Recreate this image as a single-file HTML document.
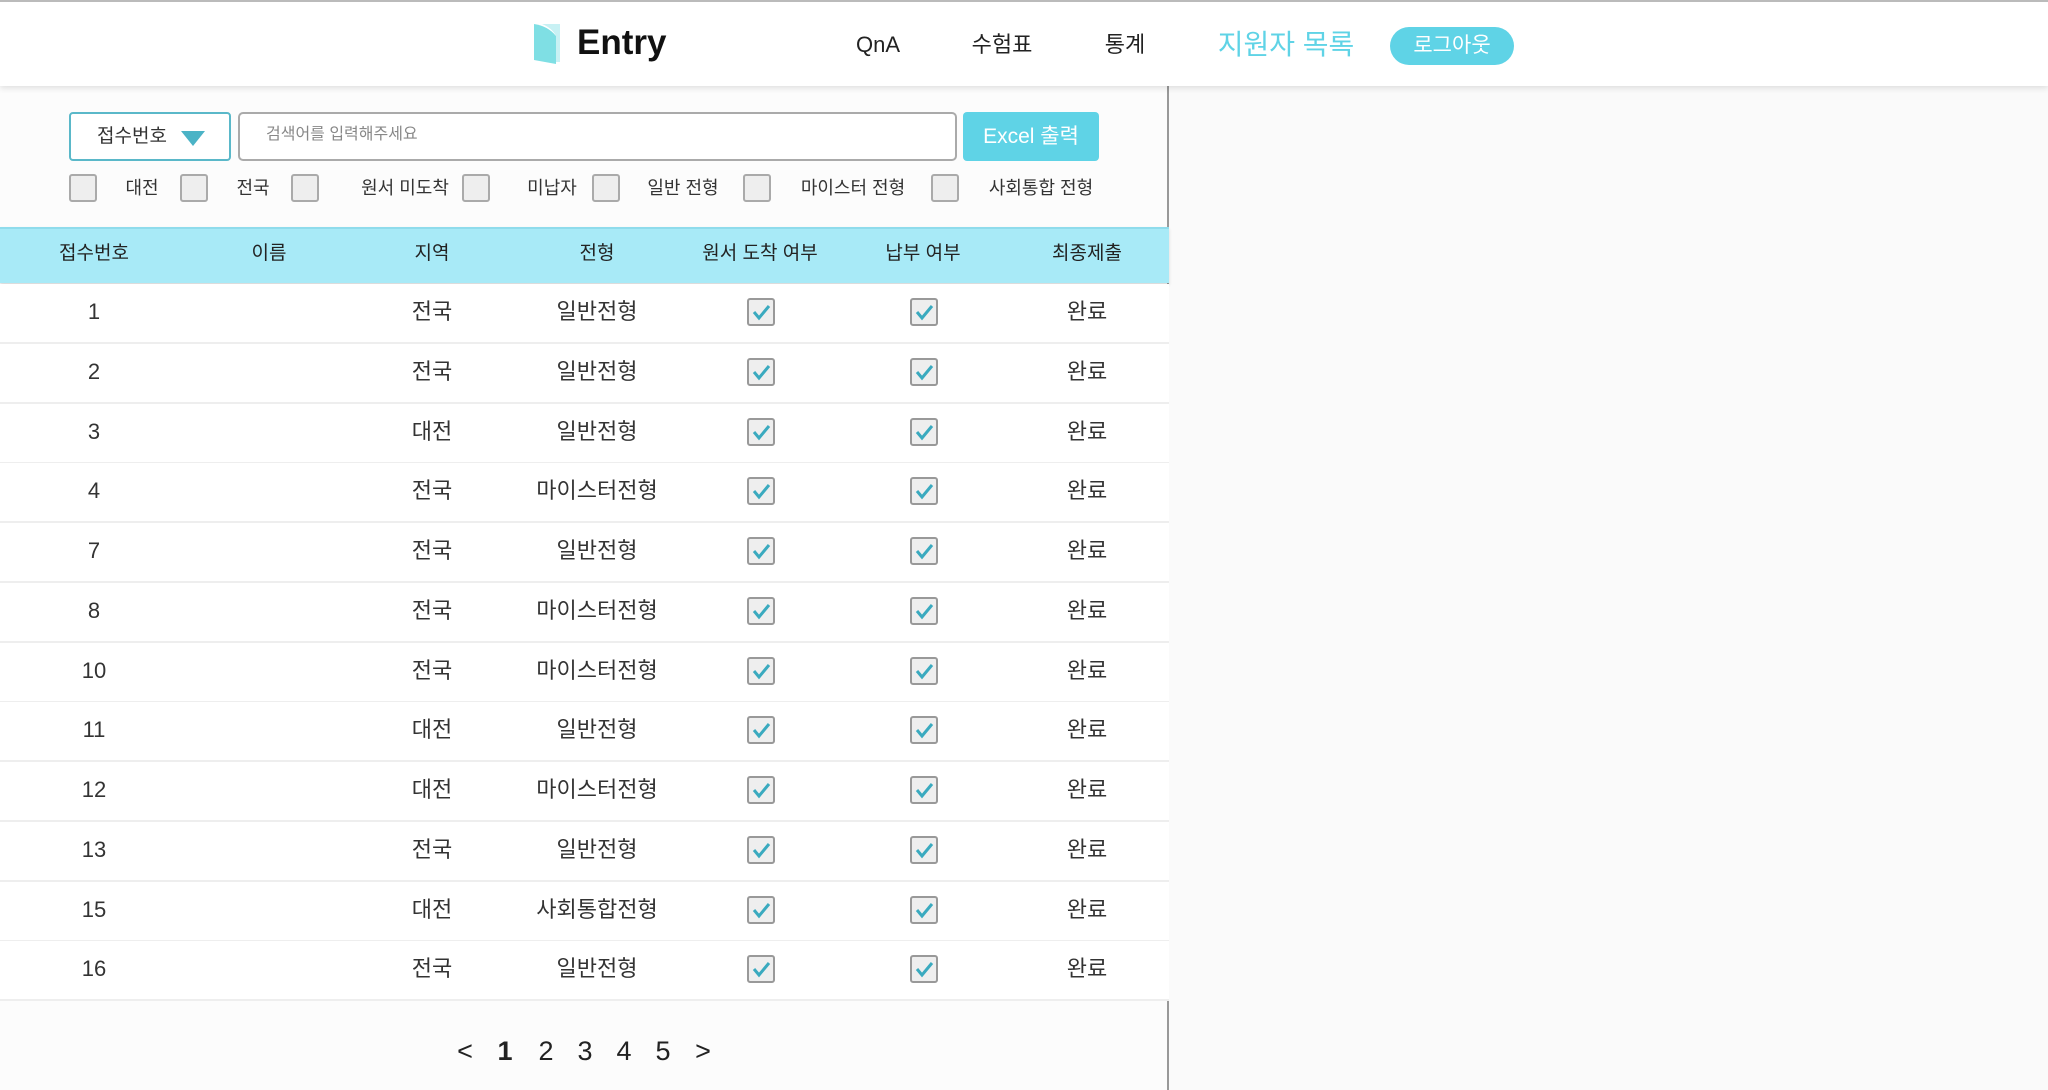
<!DOCTYPE html>
<html><head><meta charset="utf-8">
<style>
*{margin:0;padding:0;box-sizing:border-box}
body{width:2048px;height:1090px;overflow:hidden;background:#fafafa;font-family:"Liberation Sans","Noto Sans CJK KR",sans-serif;color:#222;position:relative}
.abs{position:absolute}
#hdr{left:0;top:0;width:2048px;height:86px;background:#fff;border-top:2px solid #bbb;box-shadow:0 2px 6px rgba(0,0,0,.12);z-index:3}
.nav{top:28px;height:30px;line-height:30px;font-size:22px;color:#222;transform:translateX(-50%);white-space:nowrap}
#left{left:0;top:86px;width:1169px;height:1004px;background:#fcfcfc;border-right:2px solid #999}
.cb{width:28px;height:28px;border:2px solid #aaa;border-radius:3px;background:#eee}
.lbl{font-size:18px;height:28px;line-height:28px;transform:translateX(-50%);white-space:nowrap;color:#333}
.th{font-size:19px;height:30px;line-height:30px;transform:translateX(-50%);white-space:nowrap;top:239px}
.row{left:0;width:1169px;height:60px;background:#fff;border-bottom:2px solid #eee}
.c{position:absolute;top:13px;height:30px;line-height:30px;font-size:22px;transform:translateX(-50%);white-space:nowrap;color:#333}
.ck{position:absolute;top:14px;width:28px;height:28px;border:2px solid #999;border-radius:3px;background:#eee;transform:translateX(-50%)}
.pg{top:1034px;height:34px;line-height:34px;font-size:27px;transform:translateX(-50%);color:#222}
</style></head><body>
<div id="hdr" class="abs">
  <svg class="abs" style="left:532px;top:20px" width="30" height="44" viewBox="0 0 30 44">
    <path d="M2 2 L2 38 L24 42 L24 14 Q16 4 2 2Z" fill="#7fdfe4"/>
    <path d="M10 2 L28 2 L28 40 L24 40 L24 14 Q20 6 10 2Z" fill="#c8f1f4"/>
  </svg>
  <div class="abs" style="left:577px;top:20px;height:42px;line-height:42px;font-size:35px;font-weight:bold;color:#111">Entry</div>
  <div class="abs nav" style="left:878px">QnA</div>
  <div class="abs nav" style="left:1002px">수험표</div>
  <div class="abs nav" style="left:1125px">통계</div>
  <div class="abs nav" style="left:1286px;top:24px;height:38px;line-height:38px;font-size:28px;color:#5fd3e6">지원자 목록</div>
  <div class="abs" style="left:1390px;top:25px;width:124px;height:38px;border-radius:19px;background:#5fd3e6;color:#fff;font-size:21px;text-align:center;line-height:38px">로그아웃</div>
</div>
<div id="left" class="abs"></div>
<div class="abs" style="left:69px;top:112px;width:162px;height:49px;border:2px solid #5ab8c9;border-radius:4px;background:#fff"></div>
<div class="abs" style="left:97px;top:122px;height:30px;line-height:30px;font-size:19px;color:#333">접수번호</div>
<svg class="abs" style="left:181px;top:131px" width="24" height="15"><path d="M0 0H24L12 15Z" fill="#4bb3c6"/></svg>
<div class="abs" style="left:238px;top:112px;width:719px;height:49px;border:2px solid #aaa;border-radius:5px;background:#fff"></div>
<div class="abs" style="left:266px;top:122px;height:26px;line-height:26px;font-size:16px;color:#888">검색어를 입력해주세요</div>
<div class="abs" style="left:963px;top:112px;width:136px;height:49px;border-radius:4px;background:#5fd3e6;color:#fff;font-size:21px;text-align:center;line-height:49px">Excel 출력</div>
<div class="abs cb" style="left:69px;top:174px"></div><div class="abs lbl" style="left:142px;top:174px">대전</div>
<div class="abs cb" style="left:180px;top:174px"></div><div class="abs lbl" style="left:253px;top:174px">전국</div>
<div class="abs cb" style="left:291px;top:174px"></div><div class="abs lbl" style="left:405px;top:174px">원서 미도착</div>
<div class="abs cb" style="left:462px;top:174px"></div><div class="abs lbl" style="left:552px;top:174px">미납자</div>
<div class="abs cb" style="left:592px;top:174px"></div><div class="abs lbl" style="left:683px;top:174px">일반 전형</div>
<div class="abs cb" style="left:743px;top:174px"></div><div class="abs lbl" style="left:853px;top:174px">마이스터 전형</div>
<div class="abs cb" style="left:931px;top:174px"></div><div class="abs lbl" style="left:1041px;top:174px">사회통합 전형</div>
<div class="abs" style="left:0;top:227px;width:1169px;height:56px;background:#a8eaf7;border-top:2px solid #8fdcec;box-shadow:0 2px 3px rgba(0,0,0,.15)"></div>
<div class="abs th" style="left:94px">접수번호</div>
<div class="abs th" style="left:269px">이름</div>
<div class="abs th" style="left:432px">지역</div>
<div class="abs th" style="left:597px">전형</div>
<div class="abs th" style="left:760px">원서 도착 여부</div>
<div class="abs th" style="left:923px">납부 여부</div>
<div class="abs th" style="left:1087px">최종제출</div>
<div id="rows"></div>
<div class="abs pg" style="left:465px">&lt;</div>
<div class="abs pg" style="left:505px;font-weight:bold">1</div>
<div class="abs pg" style="left:546px">2</div>
<div class="abs pg" style="left:585px">3</div>
<div class="abs pg" style="left:624px">4</div>
<div class="abs pg" style="left:663px">5</div>
<div class="abs pg" style="left:703px">&gt;</div>
<script>
var d=[["1","전국","일반전형"],["2","전국","일반전형"],["3","대전","일반전형"],["4","전국","마이스터전형"],["7","전국","일반전형"],["8","전국","마이스터전형"],["10","전국","마이스터전형"],["11","대전","일반전형"],["12","대전","마이스터전형"],["13","전국","일반전형"],["15","대전","사회통합전형"],["16","전국","일반전형"]];
var ck='<svg width="24" height="24" style="position:absolute;left:0;top:0"><path d="M5 12 L10 18 L20 6" fill="none" stroke="#3aaabf" stroke-width="3"/></svg>';
var h='';
d.forEach(function(r,i){
h+='<div class="abs row" style="top:'+(284+i*59.75)+'px">'+
'<div class="c" style="left:94px">'+r[0]+'</div>'+
'<div class="c" style="left:432px">'+r[1]+'</div>'+
'<div class="c" style="left:597px">'+r[2]+'</div>'+
'<div class="ck" style="left:761px">'+ck+'</div>'+
'<div class="ck" style="left:924px">'+ck+'</div>'+
'<div class="c" style="left:1087px">완료</div></div>';
});
document.getElementById('rows').innerHTML=h;
</script>
</body></html>
